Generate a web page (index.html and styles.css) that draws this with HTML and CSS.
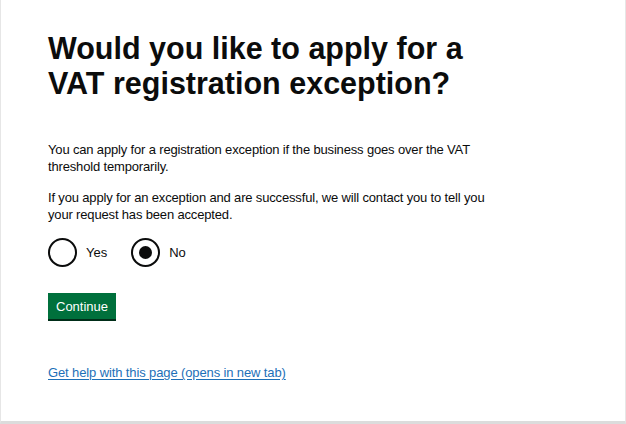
FILE: index.html
```html
<!DOCTYPE html>
<html lang="en">
<head>
<meta charset="utf-8">
<title>VAT registration exception</title>
<link rel="stylesheet" href="styles.css">
</head>
<body>
<div class="frame">
  <main class="main">
    <h1 class="heading">Would you like to apply for a VAT registration exception?</h1>
    <p class="body">You can apply for a registration exception if the business goes over the VAT threshold temporarily.</p>
    <p class="body">If you apply for an exception and are successful, we will contact you to tell you your request has been accepted.</p>
    <div class="radios">
      <label class="radio"><span class="radio-circle"></span><span class="radio-label">Yes</span></label>
      <label class="radio"><span class="radio-circle checked"></span><span class="radio-label">No</span></label>
    </div>
    <button class="button">Continue</button>
    <a class="link" href="#">Get help with this page (opens in new tab)</a>
  </main>
</div>
</body>
</html>
```

FILE: styles.css
```css
html, body {
  margin: 0;
  padding: 0;
  background: #ffffff;
}
body {
  font-family: "Liberation Sans", Arial, sans-serif;
  color: #0b0c0c;
}
.frame {
  box-sizing: border-box;
  width: 626px;
  height: 424px;
  border-left: 1px solid #e6e6e6;
  border-right: 1px solid #e6e6e6;
  border-bottom: 3px solid #dcdcdc;
  padding: 31px 0 0 47px;
}
.main {
  width: 450px;
}
.heading {
  font-size: 30.5px;
  line-height: 35px;
  font-weight: 700;
  margin: 0 0 40px 0;
  max-width: 440px;
}
.body {
  font-size: 13px;
  line-height: 17px;
  letter-spacing: -0.16px;
  margin: 0 0 14px 0;
}
.radios {
  display: flex;
  gap: 24px;
  margin-top: 15px;
  margin-bottom: 26px;
}
.radio {
  display: flex;
  align-items: center;
  gap: 9px;
}
.radio-circle {
  box-sizing: border-box;
  width: 29px;
  height: 29px;
  border: 2px solid #0b0c0c;
  border-radius: 50%;
  display: flex;
  align-items: center;
  justify-content: center;
}
.radio-circle.checked::after {
  content: "";
  width: 13px;
  height: 13px;
  border-radius: 50%;
  background: #0b0c0c;
}
.radio-label {
  font-size: 13px;
}
.button {
  display: block;
  font-family: "Liberation Sans", Arial, sans-serif;
  font-size: 13px;
  line-height: 17px;
  color: #ffffff;
  background: #00703c;
  border: 0;
  box-shadow: 0 2px 0 #002d18;
  padding: 5px 8px 4px;
  margin: 0 0 44px 0;
}
.link {
  font-size: 13px;
  letter-spacing: -0.12px;
  color: #1d70b8;
  text-decoration: underline;
  text-underline-offset: 2px;
}
```
